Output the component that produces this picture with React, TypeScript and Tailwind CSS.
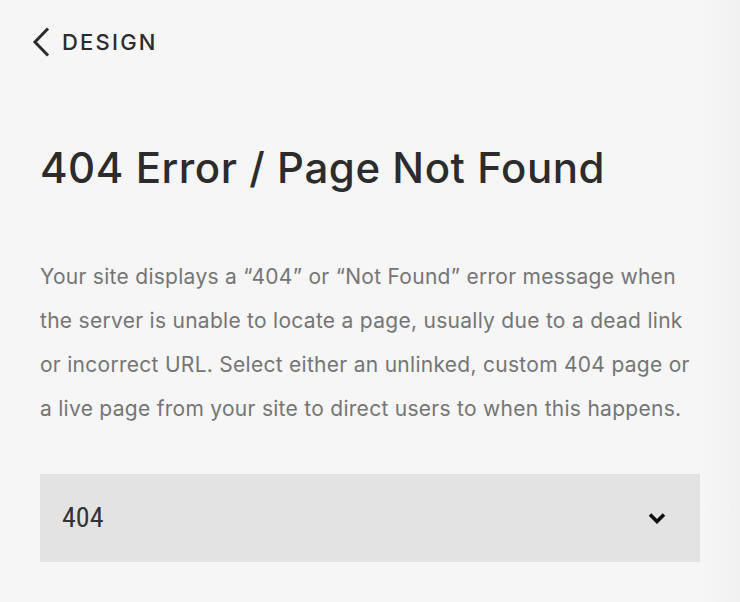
export default function App() {
  return (
    <div
      className="w-[740px] h-[602px] overflow-hidden bg-[#f6f6f6] relative"
      style={{ fontFamily: "Inter, 'Noto Sans', sans-serif" }}
    >
      <div className="absolute top-0 right-0 h-full w-[40px] bg-gradient-to-r from-transparent to-[#f0f0f0]" />
      <div className="relative px-[40px]">
        <div className="flex items-center h-[84px] -ml-[11px]">
          <svg width="22" height="30" viewBox="0 0 22 30" fill="none" className="mr-[11px]">
            <path d="M19 1.5 L6 15 L19 28.5" stroke="#2c2c2c" strokeWidth="3" strokeLinecap="butt" strokeLinejoin="miter" />
          </svg>
          <span className="text-[22px] font-medium tracking-[2.2px] text-[#2c2c2c]">DESIGN</span>
        </div>
        <h1 className="mt-[56px] text-[42px] leading-[56px] font-medium text-[#2c2c2c] tracking-[0.55px]">
          404 Error / Page Not Found
        </h1>
        <p className="mt-[59px] text-[21px] leading-[44px] text-[#757575] tracking-[0.28px] whitespace-nowrap">
          Your site displays a “404” or “Not Found” error message when
          <br />
          the server is unable to locate a page, usually due to a dead link
          <br />
          or incorrect URL. Select either an unlinked, custom 404 page or
          <br />
          a live page from your site to direct users to when this happens.
        </p>
        <div className="mt-[43px] h-[88px] w-[660px] bg-[#e3e3e3] flex items-center justify-between pl-[22px] pr-[34px]">
          <span className="text-[28px] text-[#333]" style={{ fontFamily: "'Liberation Sans Narrow', 'Roboto Condensed', Roboto, sans-serif" }}>404</span>
          <svg width="18" height="12" viewBox="0 0 18 12" fill="none">
            <path d="M2 2.5 L9 9.5 L16 2.5" stroke="#111" strokeWidth="3.6" />
          </svg>
        </div>
      </div>
    </div>
  );
}
